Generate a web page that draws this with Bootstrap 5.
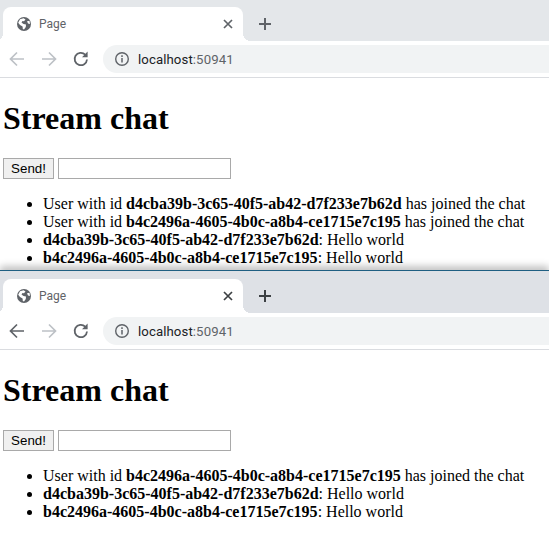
<!DOCTYPE html>
<html lang="en">
<head>
<meta charset="utf-8">
<title>Stream chat</title>
<link rel="stylesheet" href="https://cdn.jsdelivr.net/npm/bootstrap@5.3.0/dist/css/bootstrap.min.css">
<style>
html,body{margin:0;padding:0;background:#fff;overflow:hidden}
.shot{width:549px;height:557px;overflow:hidden;display:flex;flex-direction:column}
.win-a{height:270px;overflow:hidden;flex:none}
.win-b{flex:1 1 auto;overflow:hidden;box-shadow:0 -4px 7px rgba(0,0,0,.24);border-top:1px solid #1f5f82;position:relative;padding-top:1px;background:linear-gradient(#dee1e6 0 40px,#fff 40px)}
.tabstrip{height:41px;background:#e4e7ea;padding:7px 0 0 3px;gap:0}
.win-b .tabstrip{background:#dee1e6}
.tabbox{width:240px;height:34px;background:#fff;border-radius:8px 8px 0 0;padding:0 7px 0 13px;position:relative}
.tabbox::before,.tabbox::after{content:"";position:absolute;bottom:0;width:8px;height:8px;background:radial-gradient(circle at 0 0,transparent 8px,#fff 8px)}
.tabbox::before{left:-8px}
.tabbox::after{right:-8px;background:radial-gradient(circle at 100% 0,transparent 8px,#fff 8px)}
.tabname{font:12px "Roboto","Liberation Sans",sans-serif;color:#5f6368;margin-left:7px}
.newtab{margin-left:8px}
.toolrow{height:36px;background:#fff;padding-left:7px}
.navic{width:20px;height:20px;margin-right:12px;flex:none}
.urlbox{height:28px;background:#f1f3f4;border-radius:14px 0 0 14px;margin-left:0;padding-left:11px;margin-top:0}
.urltext{font:13.2px "Roboto","Liberation Sans",sans-serif;color:#202124;margin-left:8px;letter-spacing:.1px}
.urltext span{color:#5f6368}
.rule{height:1px;background:#dadce0;margin:0}
.pagebody{padding:0 8px 0 3px;font:16px/18px "Liberation Serif","Times New Roman",serif;color:#000}
.pagebody h1{font:bold 32px/37px "Liberation Serif",serif;margin:22px 0 21px;color:#000}
.sendrow{height:21px;gap:4px}
.sendbtn{font:13.33px "Liberation Sans",sans-serif;height:21px;width:51px;padding:0;border:1px solid #a9a9a9;border-radius:0;background:#f0f0f0;color:#000}
.sendinput{width:173px;height:21px;border:1px solid #a9a9a9;background:#fff;padding:0}
.pagebody ul{margin:16px 0 0;padding-left:40px;list-style:disc}
.pagebody ul b{font-weight:700}
</style>
</head>
<body>
<div class="shot">
  <section class="win-a">
    <div class="tabstrip d-flex align-items-start">
      <div class="tabbox d-flex align-items-center">
        <svg width="16" height="16" viewBox="0 0 16 16"><circle cx="8" cy="8" r="7" fill="#5f6368"/><path d="M4 3.2 7.6 2.2 9.5 3.6 8 5.2 6.5 5 5.5 6.6 7.5 8 10 8.6 9.8 11 8 13.4 6.8 13 6.6 10.6 4 9 2.2 6.8zM11 5.2 13.5 4.8 14 8 12 7.4z" fill="#fff"/></svg>
        <span class="tabname flex-grow-1">Page</span>
        <svg width="16" height="16" viewBox="0 0 16 16"><path d="M4 4 12 12M12 4 4 12" stroke="#5f6368" stroke-width="1.7"/></svg>
      </div>
      <svg class="newtab" width="28" height="34" viewBox="0 0 28 34"><path d="M14 11V23M8 17H20" stroke="#5f6368" stroke-width="2"/></svg>
    </div>
    <div class="toolrow d-flex align-items-center">
      <svg class="navic" viewBox="0 0 20 20"><path d="M17 10H4M10 3.5 3.5 10 10 16.5" fill="none" stroke="#bdc1c6" stroke-width="1.7"/></svg>
      <svg class="navic" viewBox="0 0 20 20"><path d="M3 10H16M10 3.5 16.5 10 10 16.5" fill="none" stroke="#bdc1c6" stroke-width="1.7"/></svg>
      <svg class="navic" viewBox="0 0 20 20"><path d="M16 10.5A6.2 6.2 0 1 1 14.2 5.6" fill="none" stroke="#5f6368" stroke-width="1.8"/><path d="M16.6 2.6V8.2H11z" fill="#5f6368"/></svg>
      <div class="urlbox flex-grow-1 d-flex align-items-center">
        <svg width="16" height="16" viewBox="0 0 16 16"><circle cx="8" cy="8" r="6.3" fill="none" stroke="#5f6368" stroke-width="1.4"/><path d="M8 7V11.6M8 4.3V5.9" stroke="#5f6368" stroke-width="1.5"/></svg>
        <span class="urltext">localhost<span>:50941</span></span>
      </div>
    </div>
    <div class="rule"></div>
    <div class="pagebody">
      <h1>Stream chat</h1>
      <div class="sendrow d-flex"><button class="sendbtn" type="button">Send!</button><input class="sendinput" type="text" aria-label="Message"></div>
      <ul>
        <li>User with id <b>d4cba39b-3c65-40f5-ab42-d7f233e7b62d</b> has joined the chat</li>
        <li>User with id <b>b4c2496a-4605-4b0c-a8b4-ce1715e7c195</b> has joined the chat</li>
        <li><b>d4cba39b-3c65-40f5-ab42-d7f233e7b62d</b>: Hello world</li>
        <li><b>b4c2496a-4605-4b0c-a8b4-ce1715e7c195</b>: Hello world</li>
      </ul>
    </div>
  </section>
  <section class="win-b">
    <div class="tabstrip d-flex align-items-start">
      <div class="tabbox d-flex align-items-center">
        <svg width="16" height="16" viewBox="0 0 16 16"><circle cx="8" cy="8" r="7" fill="#5f6368"/><path d="M4 3.2 7.6 2.2 9.5 3.6 8 5.2 6.5 5 5.5 6.6 7.5 8 10 8.6 9.8 11 8 13.4 6.8 13 6.6 10.6 4 9 2.2 6.8zM11 5.2 13.5 4.8 14 8 12 7.4z" fill="#fff"/></svg>
        <span class="tabname flex-grow-1">Page</span>
        <svg width="16" height="16" viewBox="0 0 16 16"><path d="M4 4 12 12M12 4 4 12" stroke="#3c4043" stroke-width="1.7"/></svg>
      </div>
      <svg class="newtab" width="28" height="34" viewBox="0 0 28 34"><path d="M14 11V23M8 17H20" stroke="#3c4043" stroke-width="2"/></svg>
    </div>
    <div class="toolrow d-flex align-items-center">
      <svg class="navic" viewBox="0 0 20 20"><path d="M17 10H4M10 3.5 3.5 10 10 16.5" fill="none" stroke="#5f6368" stroke-width="1.7"/></svg>
      <svg class="navic" viewBox="0 0 20 20"><path d="M3 10H16M10 3.5 16.5 10 10 16.5" fill="none" stroke="#bdc1c6" stroke-width="1.7"/></svg>
      <svg class="navic" viewBox="0 0 20 20"><path d="M16 10.5A6.2 6.2 0 1 1 14.2 5.6" fill="none" stroke="#5f6368" stroke-width="1.8"/><path d="M16.6 2.6V8.2H11z" fill="#5f6368"/></svg>
      <div class="urlbox flex-grow-1 d-flex align-items-center">
        <svg width="16" height="16" viewBox="0 0 16 16"><circle cx="8" cy="8" r="6.3" fill="none" stroke="#5f6368" stroke-width="1.4"/><path d="M8 7V11.6M8 4.3V5.9" stroke="#5f6368" stroke-width="1.5"/></svg>
        <span class="urltext">localhost<span>:50941</span></span>
      </div>
    </div>
    <div class="rule"></div>
    <div class="pagebody">
      <h1>Stream chat</h1>
      <div class="sendrow d-flex"><button class="sendbtn" type="button">Send!</button><input class="sendinput" type="text" aria-label="Message"></div>
      <ul>
        <li>User with id <b>b4c2496a-4605-4b0c-a8b4-ce1715e7c195</b> has joined the chat</li>
        <li><b>d4cba39b-3c65-40f5-ab42-d7f233e7b62d</b>: Hello world</li>
        <li><b>b4c2496a-4605-4b0c-a8b4-ce1715e7c195</b>: Hello world</li>
      </ul>
    </div>
  </section>
</div>
<script src="https://cdn.jsdelivr.net/npm/bootstrap@5.3.0/dist/js/bootstrap.bundle.min.js"></script>
</body>
</html>
